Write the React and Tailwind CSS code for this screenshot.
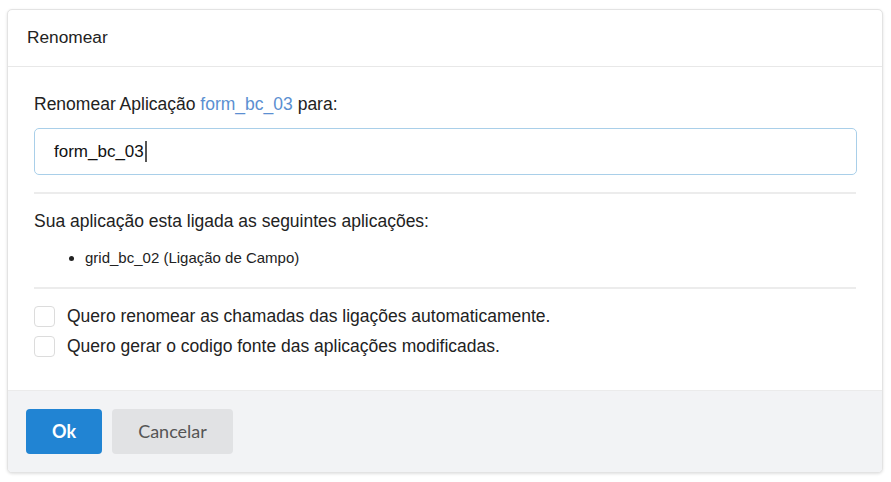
import React from "react";

export default function App() {
  return (
    <div className="w-[891px] h-[482px] bg-white pt-[9px] pl-[7px]" style={{ fontFamily: '"Liberation Sans", Arial, sans-serif' }}>
      <div className="w-[876px] h-[464px] border border-[#e3e3e3] rounded-[5px] shadow-[0_1px_3px_rgba(0,0,0,0.12)] flex flex-col overflow-hidden bg-white">
        <div className="h-[57px] shrink-0 border-b border-[#e8e8e8] flex items-center pl-[19px] text-[17.3px] text-[#222]">
          Renomear
        </div>
        <div className="flex-1 px-[26px] pt-[27px] text-[#222]">
          <div className="text-[17.5px] leading-[20px] h-[20px] whitespace-nowrap">
            Renomear Aplicação <span className="text-[#5b8fd1]">form_bc_03</span> para:
          </div>
          <div className="mt-[14px] h-[47px] border border-[#a9cfe9] rounded-[5px] flex items-center pl-[19px] text-[17px] text-[#111] mr-[-1px]">
            form_bc_03<span className="inline-block w-[2px] h-[21px] bg-[#555] ml-[1px]"></span>
          </div>
          <div className="mt-[17px] h-[2px] bg-[#ececec]"></div>
          <div className="mt-[17px] text-[17.5px] leading-[20px] h-[20px] whitespace-nowrap">Sua aplicação esta ligada as seguintes aplicações:</div>
          <ul className="mt-[19px] pl-[51px] list-disc text-[15px] leading-[16px] h-[16px] text-[#222]">
            <li>grid_bc_02 (Ligação de Campo)</li>
          </ul>
          <div className="mt-[21px] h-[2px] bg-[#ececec]"></div>
          <div className="mt-[17px] flex flex-col gap-[10px] text-[17.5px]">
            <label className="flex items-center h-[20px] gap-[12px] whitespace-nowrap">
              <span className="w-[21px] h-[21px] shrink-0 border border-[#dcdcdc] rounded-[4px] bg-white"></span>
              Quero renomear as chamadas das ligações automaticamente.
            </label>
            <label className="flex items-center h-[20px] gap-[12px] whitespace-nowrap">
              <span className="w-[21px] h-[21px] shrink-0 border border-[#dcdcdc] rounded-[4px] bg-white"></span>
              Quero gerar o codigo fonte das aplicações modificadas.
            </label>
          </div>
        </div>
        <div className="h-[82px] shrink-0 bg-[#f2f3f5] border-t border-[#ebebeb] flex items-start pt-[18px] pl-[18px] gap-[10px]" style={{ fontFamily: 'Lato, "Open Sans", sans-serif' }}>
          <button className="w-[76px] h-[45px] rounded-[4px] bg-[#2184d3] text-white font-bold text-[18px]">Ok</button>
          <button className="w-[121px] h-[45px] rounded-[4px] bg-[#e1e2e4] text-[#555] text-[18px]">Cancelar</button>
        </div>
      </div>
    </div>
  );
}
